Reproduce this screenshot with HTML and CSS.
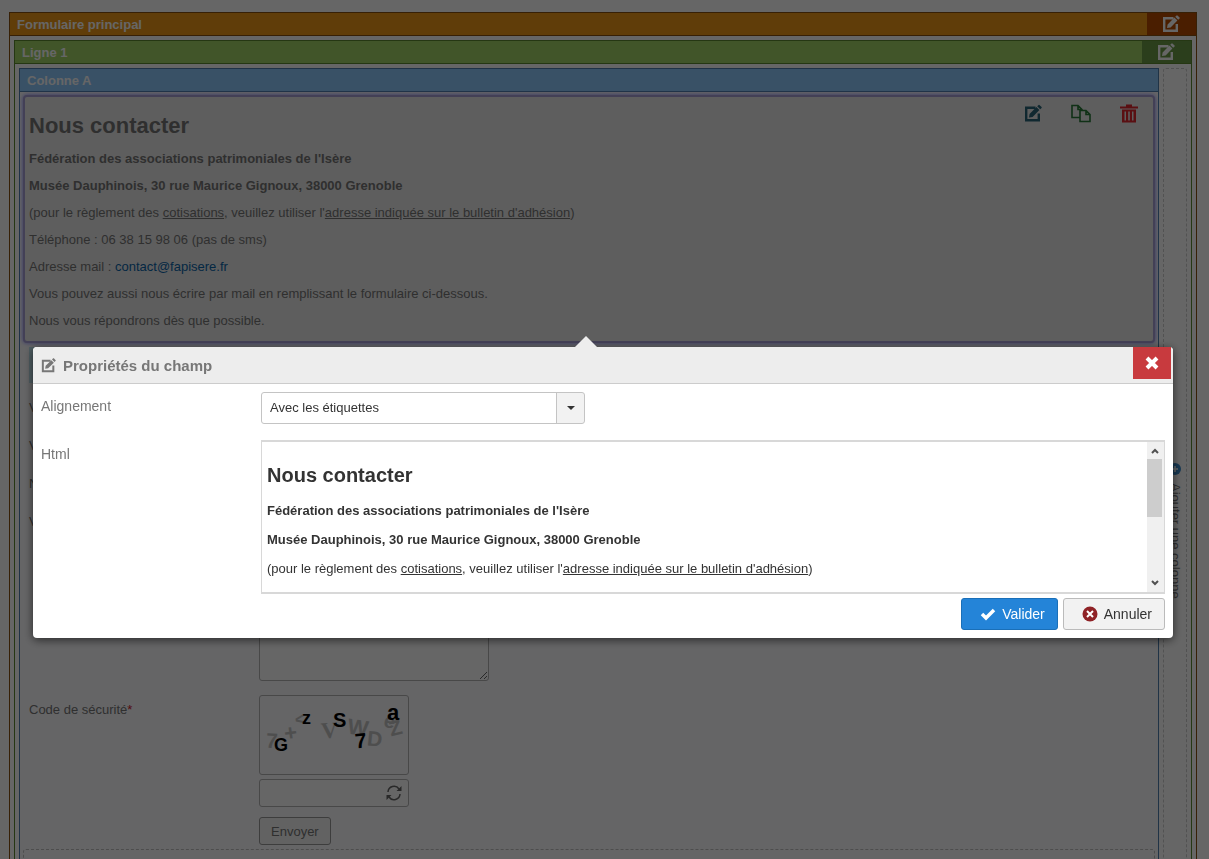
FILE: index.html
```html
<!DOCTYPE html>
<html lang="fr">
<head>
<meta charset="utf-8">
<title>Propriétés du champ</title>
<link rel="stylesheet" href="styles.css">
</head>
<body>
<svg class="sprite" aria-hidden="true">
  <symbol id="i-edit" viewBox="0 0 18 18">
    <path d="M11.500 3.200H2.200v12.600h12.600V9" fill="none" stroke="currentColor" stroke-width="2.400"/>
    <path d="M5 13l.6-3.600L12.400 2.600l3 3L8.600 12.400zM13.200 1.800L14.600.400q.4-.3.800 0L17.600 2.600q.3.400 0 .8l-1.400 1.400z" fill="currentColor"/>
  </symbol>
  <symbol id="i-copy" viewBox="0 0 20 18">
    <path d="M8.500 13H1V1h6l4 4v1M7 1v4h4M9 6h6l4 4v7H9zM15 6v4h4" fill="none" stroke="currentColor" stroke-width="1.600"/>
  </symbol>
  <symbol id="i-trash" viewBox="0 0 18 18">
    <path fill="currentColor" fill-rule="evenodd" d="M6 0h6v2h6v2H0V2H6zM2 5h14v13H2zM4.500 7v9h1.500V7zM8.200 7v9h1.600V7zM12 7v9h1.500V7z"/>
  </symbol>
</svg>

<main class="frame form-frame">
  <header class="bar">
    <span>Formulaire principal</span>
    <button class="bar-edit" aria-label="Modifier le formulaire"><svg><use href="#i-edit"/></svg></button>
  </header>
  <div class="frame-body">
    <section class="frame row-frame">
      <header class="bar">
        <span>Ligne 1</span>
        <button class="bar-edit" aria-label="Modifier la ligne"><svg><use href="#i-edit"/></svg></button>
      </header>
      <div class="frame-body columns">
        <section class="frame column-frame">
          <header class="bar"><span>Colonne A</span></header>
          <div class="column-body">
            <article class="field selected">
              <div class="tools">
                <button class="tool-edit" aria-label="Modifier"><svg><use href="#i-edit"/></svg></button>
                <button class="tool-copy" aria-label="Copier"><svg><use href="#i-copy"/></svg></button>
                <button class="tool-trash" aria-label="Supprimer"><svg><use href="#i-trash"/></svg></button>
              </div>
              <h1>Nous contacter</h1>
              <p><b>Fédération des associations patrimoniales de l'Isère</b></p>
              <p><b>Musée Dauphinois, 30 rue Maurice Gignoux, 38000 Grenoble</b></p>
              <p>(pour le règlement des <u>cotisations</u>, veuillez utiliser l'<u>adresse indiquée sur le bulletin d'adhésion</u>)</p>
              <p>Téléphone : 06 38 15 98 06 (pas de sms)</p>
              <p>Adresse mail : <a href="mailto:contact@fapisere.fr">contact@fapisere.fr</a></p>
              <p>Vous pouvez aussi nous écrire par mail en remplissant le formulaire ci-dessous.</p>
              <p>Nous vous répondrons dès que possible.</p>
            </article>
            <div class="group-bar"></div>
            <div class="inputs">
              <label for="f1">V</label><input id="f1" class="box">
              <label for="f2">V</label><input id="f2" class="box">
              <label for="f3">N</label><input id="f3" class="box">
              <label for="f4">V</label><textarea id="f4" class="box message"></textarea>
              <label for="code">Code de sécurité<span class="required">*</span></label>
              <div class="security">
                <svg class="captcha" viewBox="0 0 148 78" role="img" aria-label="Code">
                  <g class="noise">
                    <text x="6" y="52" font-size="21" transform="rotate(4 12 44)">7</text>
                    <text x="24" y="44" font-size="22" transform="rotate(-8 31 36)">+</text>
                    <text x="35" y="29" font-size="17" transform="rotate(-10 40 24)">&lt;</text>
                    <text x="61" y="42" font-size="23" class="serif" transform="rotate(-4 70 34)">V</text>
                    <text x="88" y="39" font-size="22" transform="rotate(8 98 30)">W</text>
                    <text x="107" y="50" font-size="21" transform="rotate(6 114 44)">D</text>
                    <text x="124" y="32" font-size="20" transform="rotate(10 130 26)">e</text>
                    <text x="129" y="39" font-size="21" transform="rotate(-14 136 32)">Z</text>
                  </g>
                  <g class="signs">
                    <text x="14" y="55" font-size="18">G</text>
                    <text x="42" y="28" font-size="18">z</text>
                    <text x="73" y="31" font-size="20">S</text>
                    <text x="95" y="52" font-size="21" transform="rotate(-6 101 45)">7</text>
                    <text x="127" y="24" font-size="22">a</text>
                  </g>
                </svg>
                <div class="code-entry">
                  <input id="code" class="box">
                  <button class="refresh" aria-label="Nouveau code">
                    <svg viewBox="0 0 16 16"><path d="M2 7a6 6 0 0 1 11-3M14 9a6 6 0 0 1-11 3" fill="none" stroke="currentColor" stroke-width="1.500"/><path d="M15.500 1v5h-5zM.500 15v-5h5z" fill="currentColor"/></svg>
                  </button>
                </div>
                <button class="send">Envoyer</button>
              </div>
            </div>
            <div class="drop-zone"></div>
          </div>
        </section>
        <button class="add-column">
          <svg viewBox="0 0 12 12"><circle cx="6" cy="6" r="6" fill="currentColor"/><path d="M6 3v6M3 6h6" stroke="#fff" stroke-width="1.500"/></svg>
          <span>Ajouter une colonne</span>
        </button>
      </div>
    </section>
  </div>
</main>

<div class="overlay"></div>

<div class="dialog" role="dialog" aria-labelledby="dialog-title">
  <header class="dialog-head">
    <svg><use href="#i-edit"/></svg>
    <h2 id="dialog-title">Propriétés du champ</h2>
    <button class="close" aria-label="Fermer"><svg viewBox="0 0 14 14"><path d="M2 2l10 10M12 2L2 12" stroke="currentColor" stroke-width="4"/></svg></button>
  </header>
  <div class="dialog-body">
    <label for="align">Alignement</label>
    <div class="select"><select id="align"><option>Avec les étiquettes</option></select></div>
    <span class="label" id="html-label">Html</span>
    <div class="editor">
      <div class="editor-text" contenteditable="true" role="textbox" aria-labelledby="html-label">
        <h1>Nous contacter</h1>
        <p><b>Fédération des associations patrimoniales de l'Isère</b></p>
        <p><b>Musée Dauphinois, 30 rue Maurice Gignoux, 38000 Grenoble</b></p>
        <p>(pour le règlement des <u>cotisations</u>, veuillez utiliser l'<u>adresse indiquée sur le bulletin d'adhésion</u>)</p>
      </div>
      <div class="scrollbar">
        <svg viewBox="0 0 8 6"><path d="M1 5l3-3 3 3" fill="none" stroke="currentColor" stroke-width="2"/></svg>
        <div class="track"><div class="thumb"></div></div>
        <svg viewBox="0 0 8 6"><path d="M1 1l3 3 3-3" fill="none" stroke="currentColor" stroke-width="2"/></svg>
      </div>
    </div>
  </div>
  <footer class="dialog-foot">
    <button class="action primary"><svg viewBox="0 0 16 16"><path d="M2 8l4 4 8-8" fill="none" stroke="currentColor" stroke-width="3.500"/></svg>Valider</button>
    <button class="action"><svg viewBox="0 0 16 16"><circle cx="8" cy="8" r="7.500" fill="#8f2226"/><path d="M5 5l6 6M11 5l-6 6" stroke="#fff" stroke-width="2"/></svg>Annuler</button>
  </footer>
</div>
</body>
</html>
```
FILE: styles.css
```css
* { box-sizing: border-box; }
body {
  margin: 0;
  padding: 12px 12px 12px 9px;
  height: 100vh;
  overflow: hidden;
  background: #fff;
  color: #777;
  font: 13px/17px "Liberation Sans", Arial, sans-serif;
}
button, input, select, textarea { font: inherit; color: inherit; }
button { padding: 0; border: 0; background: none; }
h1, h2, p { margin: 0; }
.sprite { position: absolute; width: 0; height: 0; }

/* Nested builder frames */
.frame { border: 1px solid var(--edge); }
.form-frame { --edge: #8a5210; --fill: #f09a18; --dark: #b84c00; }
.row-frame { --edge: #5c8a30; --fill: #a2d468; --dark: #6b9c47; }
.column-frame { --edge: #5080b0; --fill: #8fcbff; background: #fcfcff; }
.frame-body { padding: 4px; }
.bar {
  display: flex;
  justify-content: space-between;
  height: 23px;
  border-bottom: 1px solid var(--edge);
  background: var(--fill);
  color: #fff;
  font-weight: bold;
  line-height: 23px;
  padding-left: 7px;
}
.bar-edit {
  display: flex;
  align-items: center;
  justify-content: center;
  width: 49px;
  padding-right: 2px;
  background: var(--dark);
}
.bar-edit svg { width: 18px; height: 18px; }
.columns { display: grid; grid-template-columns: 1fr 24px; gap: 4px; }
.column-body { padding: 3px; }

.field {
  position: relative;
  display: flex;
  flex-direction: column;
  gap: 10px;
  padding: 15px 4px 12px;
  border: 2px solid #a9a0d8;
  border-radius: 4px;
  background: #ebebeb;
  box-shadow: 0 0 4px #8080ff;
}
.field h1 { font-size: 22px; line-height: 28px; }
.field a { color: #0a64a8; text-decoration: none; }
.tools { position: absolute; top: 7px; right: 15px; display: flex; gap: 29px; }
.tools button { display: flex; }
.tools svg { width: 18px; height: 19px; }
.tools .tool-copy svg { width: 20px; }
.tool-edit { color: #286478; }
.tool-copy { color: #287a38; }
.tool-trash { color: #e0262e; }

.group-bar { height: 36px; margin: 4px 6px 0; background: #c4e8f4; }
.inputs {
  display: grid;
  grid-template-columns: 230px 1fr;
  row-gap: 10px;
  align-items: start;
  padding: 10px 6px 4px;
}
.inputs label { padding-top: 6px; }
.box {
  width: 230px;
  height: 28px;
  margin: 0;
  border: 1px solid #b4b4b4;
  border-radius: 3px;
  background: #fff;
}
.message { display: block; height: 174px; margin-bottom: 4px; }
.required { color: #d0202c; }
.security { display: grid; justify-items: start; gap: 4px; }
.captcha { width: 150px; height: 80px; border: 1px solid #b4b4b4; border-radius: 3px; }
.captcha text { font-family: "Liberation Sans", Arial, sans-serif; font-weight: bold; }
.captcha .serif { font-family: "Liberation Serif", serif; }
.noise { fill: #c4c4c4; }
.signs { fill: #000; }
.code-entry { position: relative; }
.code-entry .box { display: block; width: 150px; }
.refresh { position: absolute; top: 6px; right: 7px; color: #666; }
.refresh svg { display: block; width: 16px; height: 16px; }
.send {
  height: 28px;
  margin-top: 6px;
  padding: 0 11px;
  border: 1px solid #999;
  border-radius: 3px;
  background: #f4f4f4;
}
.drop-zone { height: 140px; border: 1px dashed #c0c0c0; border-radius: 3px; }
.add-column {
  display: flex;
  flex-direction: column;
  align-items: center;
  justify-content: center;
  gap: 8px;
  border: 1px dashed #ccc;
  border-radius: 3px;
}
.add-column svg { width: 12px; height: 12px; color: #3c8ccc; }
.add-column span { writing-mode: vertical-rl; }

.overlay { position: fixed; inset: 0; background: rgba(0, 0, 0, .6); }

/* Field properties dialog */
.dialog {
  position: fixed;
  top: 347px;
  left: 33px;
  right: 36px;
  border-radius: 4px;
  background: #fff;
  box-shadow: 0 2px 10px rgba(0, 0, 0, .6);
  color: #777;
  font-size: 14px;
}
.dialog::before {
  content: "";
  position: absolute;
  top: -11px;
  left: 48.5%;
  margin-left: -11px;
  border: 11px solid transparent;
  border-top: 0;
  border-bottom-color: #ededed;
}
.dialog-head {
  display: flex;
  align-items: center;
  gap: 7px;
  height: 37px;
  padding: 0 2px 0 8px;
  border-bottom: 1px solid #ccc;
  border-radius: 4px 4px 0 0;
  background: #ededed;
}
.dialog-head > svg { width: 15px; height: 15px; }
.dialog-head h2 { font-size: 15px; }
.close {
  display: flex;
  align-items: center;
  justify-content: center;
  align-self: flex-start;
  width: 38px;
  height: 32px;
  margin-left: auto;
  background: #c83a3e;
  color: #fff;
}
.close svg { width: 14px; height: 14px; }
.dialog-body {
  display: grid;
  grid-template-columns: 220px 1fr;
  row-gap: 16px;
  padding: 8px 8px 4px;
}
.dialog-body label, .label { padding-top: 6px; }
.select { position: relative; width: 324px; }
.select select {
  display: block;
  appearance: none;
  width: 100%;
  height: 32px;
  padding: 0 36px 1px 8px;
  border: 1px solid #c4c4c4;
  border-radius: 3px;
  background: linear-gradient(#c4c4c4, #c4c4c4) right 27px top / 1px 100% no-repeat, linear-gradient(#f2f2f2, #f2f2f2) right / 27px 100% no-repeat, #fff;
  color: #333;
  font-size: 13px;
}
.select::after {
  content: "";
  position: absolute;
  top: 14px;
  right: 10px;
  border: 4px solid transparent;
  border-top-color: #333;
  border-bottom: 0;
  pointer-events: none;
}
.editor {
  display: flex;
  height: 154px;
  border: 1px solid #d8d8d8;
  border-width: 2px 1px;
  color: #333;
  font-size: 13px;
}
.editor-text {
  flex: 1;
  display: flex;
  flex-direction: column;
  gap: 12px;
  padding: 19px 5px 0;
  overflow: hidden;
}
.editor-text h1 { font-size: 20px; line-height: 29px; }
.scrollbar {
  display: flex;
  flex-direction: column;
  align-items: center;
  width: 17px;
  padding: 6px 2px 6px 0;
  gap: 5px;
  background: #f0f0f0;
  color: #505050;
}
.scrollbar svg { width: 8px; height: 6px; }
.track { flex: 1; width: 15px; }
.thumb { height: 58px; background: #cdcdcd; }
.dialog-foot {
  display: flex;
  justify-content: flex-end;
  gap: 5px;
  padding: 0 8px 8px;
}
.action {
  display: flex;
  align-items: center;
  gap: 6px;
  height: 32px;
  padding: 0 12px 0 18px;
  border: 1px solid #bbb;
  border-radius: 3px;
  background: #f2f2f2;
  color: #333;
}
.action svg { width: 16px; height: 16px; }
.primary { border-color: #1a6fb8; background: #2484d8; color: #fff; }
```
